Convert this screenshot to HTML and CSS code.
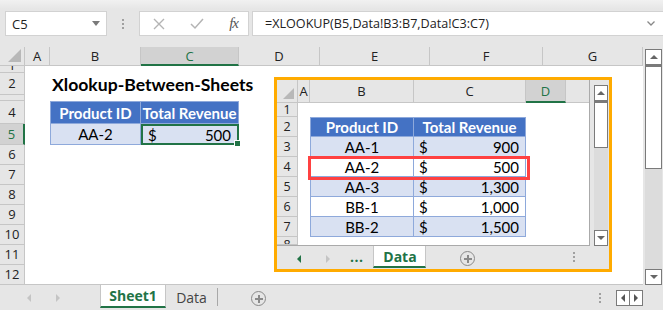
FILE: index.html
```html
<!DOCTYPE html>
<html lang="en">
<head>
    <meta charset="UTF-8">
    <title>Xlookup Between Sheets</title>
    <link rel="stylesheet" href="styles.css">
</head>
<body>
<div class="app">
    <!-- barra de formula -->
    <div class="fbar">
        <div class="namebox">
            <span>C5</span>
            <svg class="dd" width="8" height="5" viewBox="0 0 8 5"><path d="M0 0h8L4 5z" fill="#7a7a7a"/></svg>
        </div>
        <div class="vdots"><i></i><i></i><i></i></div>
        <div class="fbtns">
            <svg width="12" height="12" viewBox="0 0 12 12"><path d="M1 1l10 10M11 1L1 11" stroke="#b4b4b4" stroke-width="1.4"/></svg>
            <svg width="14" height="12" viewBox="0 0 14 12"><path d="M1 6l4 4 8-9" stroke="#b4b4b4" stroke-width="1.5" fill="none"/></svg>
            <span class="fx">fx</span>
        </div>
        <div class="finput">
            <span>=XLOOKUP(B5,Data!B3:B7,Data!C3:C7)</span>
            <svg class="chev" width="8" height="5" viewBox="0 0 8 5"><path d="M0.5 0.5L4 4l3.5-3.5" stroke="#888" stroke-width="1.3" fill="none"/></svg>
        </div>
    </div>

    <div class="main">
        <div class="grid">
            <div class="corner"><b></b></div>
            <div class="ch">A</div>
            <div class="ch">B</div>
            <div class="ch sel">C</div>
            <div class="ch">D</div>
            <div class="ch">E</div>
            <div class="ch">F</div>
            <div class="ch">G</div>

            <div class="rh small">1</div>
            <div class="rh">2</div>
            <div class="rh small"></div>
            <div class="rh">4</div>
            <div class="rh sel">5</div>
            <div class="rh">6</div>
            <div class="rh">7</div>
            <div class="rh">8</div>
            <div class="rh">9</div>
            <div class="rh">10</div>
            <div class="rh">11</div>
            <div class="rh">12</div>

            <div class="title">Xlookup-Between-Sheets</div>
            <div class="th cb">Product ID</div>
            <div class="th cc">Total Revenue</div>
            <div class="td cb r5">AA-2</div>
            <div class="td cc r5 num active"><span>$</span><span>500</span><i class="handle"></i></div>

            <!-- imagem colada da aba Data -->
            <div class="inset">
                <div class="inset-top">
                    <div class="igrid">
                        <div class="corner"><b></b></div>
                        <div class="ich">A</div>
                        <div class="ich">B</div>
                        <div class="ich">C</div>
                        <div class="ich sel">D</div>
                        <div class="ich blank"></div>

                        <div class="irh">1</div>
                        <div class="irh">2</div>
                        <div class="irh">3</div>
                        <div class="irh">4</div>
                        <div class="irh">5</div>
                        <div class="irh">6</div>
                        <div class="irh">7</div>
                        <div class="irh cut">8</div>

                        <div class="ith ib" style="grid-row: 3">Product ID</div>
                        <div class="ith ic" style="grid-row: 3">Total Revenue</div>

                        <div class="itd ib band" style="grid-row: 4">AA-1</div>
                        <div class="itd ic band num" style="grid-row: 4"><span>$</span><span>900</span></div>
                        <div class="itd ib" style="grid-row: 5">AA-2</div>
                        <div class="itd ic num" style="grid-row: 5"><span>$</span><span>500</span></div>
                        <div class="itd ib band" style="grid-row: 6">AA-3</div>
                        <div class="itd ic band num" style="grid-row: 6"><span>$</span><span>1,300</span></div>
                        <div class="itd ib" style="grid-row: 7">BB-1</div>
                        <div class="itd ic num" style="grid-row: 7"><span>$</span><span>1,000</span></div>
                        <div class="itd ib band" style="grid-row: 8">BB-2</div>
                        <div class="itd ic band num" style="grid-row: 8"><span>$</span><span>1,500</span></div>
                    </div>
                    <div class="iscroll">
                        <div class="sbtn up"></div>
                        <div class="thumb ithumb"></div>
                        <div class="track"></div>
                        <div class="sbtn down"></div>
                    </div>
                </div>
                <div class="itabs">
                    <span class="arr left green"></span>
                    <span class="arr right"></span>
                    <span class="more">...</span>
                    <div class="tab on">Data</div>
                    <span class="plus"></span>
                    <div class="vdots tabdots"><i></i><i></i><i></i></div>
                </div>
                <div class="redbox"></div>
            </div>
        </div>
        <div class="vscroll">
            <div class="sbtn up"></div>
            <div class="thumb mthumb"></div>
            <div class="track"></div>
            <div class="sbtn down"></div>
        </div>
    </div>

    <div class="tabs">
        <span class="arr left"></span>
        <span class="arr right"></span>
        <div class="tab on">Sheet1</div>
        <div class="tab off">Data</div>
        <span class="plus"></span>
        <div class="spacer"></div>
        <div class="vdots tabdots"><i></i><i></i><i></i></div>
        <div class="hbtns">
            <span class="hb"><i class="harr hleft"></i></span>
            <span class="hb"><i class="harr hright"></i></span>
        </div>
    </div>
</div>
</body>
</html>
```

FILE: styles.css
```css
body {
    margin: 0;
    background: #e6e6e6;
    font-family: "Open Sans", "Noto Sans", sans-serif;
}
.app {
    width: 663px;
    height: 310px;
    overflow: hidden;
    background: #e6e6e6;
}

/* formula bar */
.fbar {
    height: 47px;
    box-sizing: border-box;
    padding: 11px 0 0 5px;
    display: flex;
    align-items: flex-start;
    background: linear-gradient(#f1f1f1, #e6e6e6 9px);
}
.namebox, .fbtns, .finput {
    height: 25px;
    box-sizing: border-box;
    background: #fff;
    border: 1px solid #d2d2d2;
    display: flex;
    align-items: center;
    font-size: 13px;
    color: #222;
}
.namebox {
    width: 102px;
    padding: 0 6px;
    justify-content: space-between;
}
.vdots {
    width: 32px;
    height: 25px;
    display: flex;
    flex-direction: column;
    align-items: center;
    justify-content: center;
    gap: 2px;
}
.vdots i {
    width: 2px;
    height: 2px;
    background: #a0a0a0;
}
.fbtns {
    width: 110px;
    padding: 0 10px 0 13px;
    justify-content: space-between;
}
.fx {
    font-family: "Liberation Serif", serif;
    font-style: italic;
    font-size: 15px;
    color: #555;
    letter-spacing: -1px;
}
.finput {
    flex: 1;
    margin-left: 3px;
    border-right: none;
    padding: 0 8px 0 12px;
    justify-content: space-between;
    font-size: 12.6px;
}

/* sheet */
.main {
    display: flex;
    height: 238px;
}
.grid {
    position: relative;
    width: 643px;
    background: #fff;
    display: grid;
    grid-template-columns: 25px 25px 91px 98px 81px 110px 113px 100px;
    grid-template-rows: 19px 7px 22px 6px 23px 21px repeat(7, 20px);
    border-bottom: 1px solid #c6c6c6;
    box-sizing: border-box;
}
.corner {
    grid-row: 1;
    grid-column: 1;
    background: #e6e6e6;
    border-right: 1px solid #c6c6c6;
    border-bottom: 1px solid #c6c6c6;
    position: relative;
}
.corner b {
    position: absolute;
    right: 3px;
    bottom: 3px;
    width: 13px;
    height: 13px;
    background: #b8b8b8;
    clip-path: polygon(100% 0, 100% 100%, 0 100%);
}
.ch, .ich {
    grid-row: 1;
    background: #e6e6e6;
    border-right: 1px solid #c6c6c6;
    border-bottom: 1px solid #c6c6c6;
    font-size: 13px;
    color: #222;
    display: flex;
    align-items: center;
    justify-content: center;
}
.ch.sel, .ich.sel {
    background: #d2d2d2;
    color: #217346;
    border-bottom: 2px solid #217346;
}
.ch:last-of-type {
    border-right: none;
}
.rh, .irh {
    grid-column: 1;
    background: #e6e6e6;
    border-right: 1px solid #c6c6c6;
    border-bottom: 1px solid #c6c6c6;
    font-size: 13px;
    color: #222;
    display: flex;
    align-items: center;
    justify-content: center;
    overflow: hidden;
    line-height: 1;
}
.irh {
    font-size: 12.5px;
    line-height: 12px;
}
.rh.small {
    align-items: flex-end;
}
.rh.sel {
    background: #d2d2d2;
    color: #217346;
    border-right: 2px solid #217346;
}

/* cells */
.title {
    grid-row: 3;
    grid-column: 3;
    white-space: nowrap;
    font-family: Lato, sans-serif;
    font-weight: bold;
    font-size: 17.6px;
    padding-left: 2px;
    display: flex;
    align-items: center;
}
.th, .td, .ith, .itd {
    font-family: Lato, sans-serif;
    font-size: 15px;
    display: flex;
    align-items: center;
    justify-content: center;
    box-sizing: border-box;
    border-right: 1px solid #8ea9db;
    border-bottom: 1px solid #8ea9db;
}
.th, .ith {
    background: #4472c4;
    color: #fff;
    font-weight: bold;
    border-top: 1px solid #8ea9db;
}
.th { grid-row: 5; }
.td { grid-row: 6; background: #d9e1f2; }
.cb { grid-column: 3; border-left: 1px solid #8ea9db; }
.cc { grid-column: 4; }
.num {
    justify-content: space-between;
    padding: 0 6px 0 5px;
}
.active {
    position: relative;
    border: 2px solid #217346;
}
.handle {
    position: absolute;
    right: -4px;
    bottom: -4px;
    width: 5px;
    height: 5px;
    background: #217346;
    border: 1px solid #fff;
}

/* embedded picture */
.inset {
    position: absolute;
    left: 274px;
    top: 30px;
    width: 338px;
    height: 195px;
    box-sizing: border-box;
    border: 3px solid #ffab00;
    background: #e6e6e6;
    display: flex;
    flex-direction: column;
}
.inset-top {
    display: flex;
    height: 166px;
}
.igrid {
    width: 313px;
    background: #fff;
    border-right: 1px solid #aaa;
    border-bottom: 1px solid #aaa;
    box-sizing: border-box;
    display: grid;
    grid-template-columns: 21px 12px 104px 112px 40px 1fr;
    grid-template-rows: 23px 14px repeat(6, 20px) 1fr;
}
.igrid .corner b {
    width: 11px;
    height: 11px;
}
.ich.blank {
    border-right: none;
}
.irh.cut {
    align-items: flex-start;
    padding-top: 2px;
}
.ib { grid-column: 3; border-left: 1px solid #8ea9db; }
.ic { grid-column: 4; }
.band { background: #d9e1f2; }
.redbox {
    position: absolute;
    left: 31px;
    top: 76px;
    width: 222px;
    height: 24px;
    box-sizing: border-box;
    border: 3px solid #ff4141;
}

/* scrollbars */
.iscroll, .vscroll {
    display: flex;
    flex-direction: column;
    box-sizing: border-box;
}
.iscroll {
    width: 19px;
    padding: 5px 1px 0 4px;
}
.vscroll {
    width: 20px;
    padding: 2px 1px 0 2px;
}
.sbtn {
    height: 14px;
    background: #fff;
    border: 1px solid #7a7a7a;
    position: relative;
    flex-shrink: 0;
}
.sbtn::after {
    content: "";
    position: absolute;
    left: 50%;
    top: 50%;
    margin: -2px 0 0 -4px;
    border-left: 4px solid transparent;
    border-right: 4px solid transparent;
}
.sbtn.up::after { border-bottom: 4px solid #666; }
.sbtn.down::after { border-top: 4px solid #666; }
.thumb {
    background: #fff;
    border: 1px solid #7a7a7a;
    border-top-width: 2px;
    flex-shrink: 0;
}
.ithumb { height: 44px; }
.mthumb { height: 101px; }
.track {
    flex: 1;
    background: #dcdcdc;
}

/* sheet tabs */
.tabs, .itabs {
    display: flex;
    align-items: flex-start;
    font-size: 14px;
}
.tabs {
    height: 25px;
}
.itabs {
    height: 23px;
    position: relative;
}
.arr {
    display: block;
    width: 0;
    height: 0;
    border-top: 4px solid transparent;
    border-bottom: 4px solid transparent;
    margin-top: 9px;
}
.arr.left { border-right: 4px solid #c4c4c4; }
.arr.right { border-left: 4px solid #c4c4c4; }
.arr.green { border-right-color: #217346; }
.tabs .arr.left { margin-left: 27px; }
.tabs .arr.right { margin-left: 25px; }
.itabs .arr.left { margin-left: 20px; }
.itabs .arr.right { margin-left: 25px; }
.more {
    color: #217346;
    font-weight: bold;
    margin: 1px 0 0 20px;
    letter-spacing: 0.5px;
}
.tab {
    height: 100%;
    box-sizing: border-box;
    display: flex;
    align-items: center;
    justify-content: center;
}
.tab.on {
    background: #fff;
    color: #217346;
    font-weight: bold;
    border-bottom: 2px solid #217346;
    border-left: 1px solid #c6c6c6;
    border-right: 1px solid #c6c6c6;
}
.tabs .tab.on {
    width: 66px;
    margin-left: 40px;
    height: 23px;
}
.itabs .tab.on {
    width: 53px;
    margin-left: 10px;
    height: 22px;
}
.tab.off {
    width: 52px;
    height: 18px;
    margin-top: 3px;
    color: #444;
    border-right: 1px solid #a8a8a8;
}
.plus {
    width: 15px;
    height: 15px;
    box-sizing: border-box;
    border: 1.5px solid #8a8a8a;
    border-radius: 50%;
    position: relative;
    margin-top: 5px;
}
.plus::before, .plus::after {
    content: "";
    position: absolute;
    background: #8a8a8a;
    left: 50%;
    top: 50%;
}
.plus::before { width: 8px; height: 2px; margin: -1px 0 0 -4px; }
.plus::after { width: 2px; height: 8px; margin: -4px 0 0 -1px; }
.tabs .plus { margin-left: 33px; margin-top: 6px; }
.itabs .plus { margin-left: 34px; }
.tabdots {
    width: auto;
    height: 14px;
}
.tabs .tabdots { margin: 6px 0 0 0; }
.itabs .tabdots { position: absolute; left: 296px; top: 4px; }
.spacer { flex: 1; }
.hbtns {
    display: flex;
    margin: 5px 20px 0 15px;
}
.hb {
    width: 12px;
    height: 14px;
    border: 1px solid #7a7a7a;
    background: #fff;
    display: flex;
    justify-content: center;
    align-items: center;
}
.hb + .hb { border-left: none; }
.harr {
    display: block;
    width: 0;
    height: 0;
    border-top: 4px solid transparent;
    border-bottom: 4px solid transparent;
}
.hleft { border-right: 4px solid #555; }
.hright { border-left: 4px solid #555; }
```
